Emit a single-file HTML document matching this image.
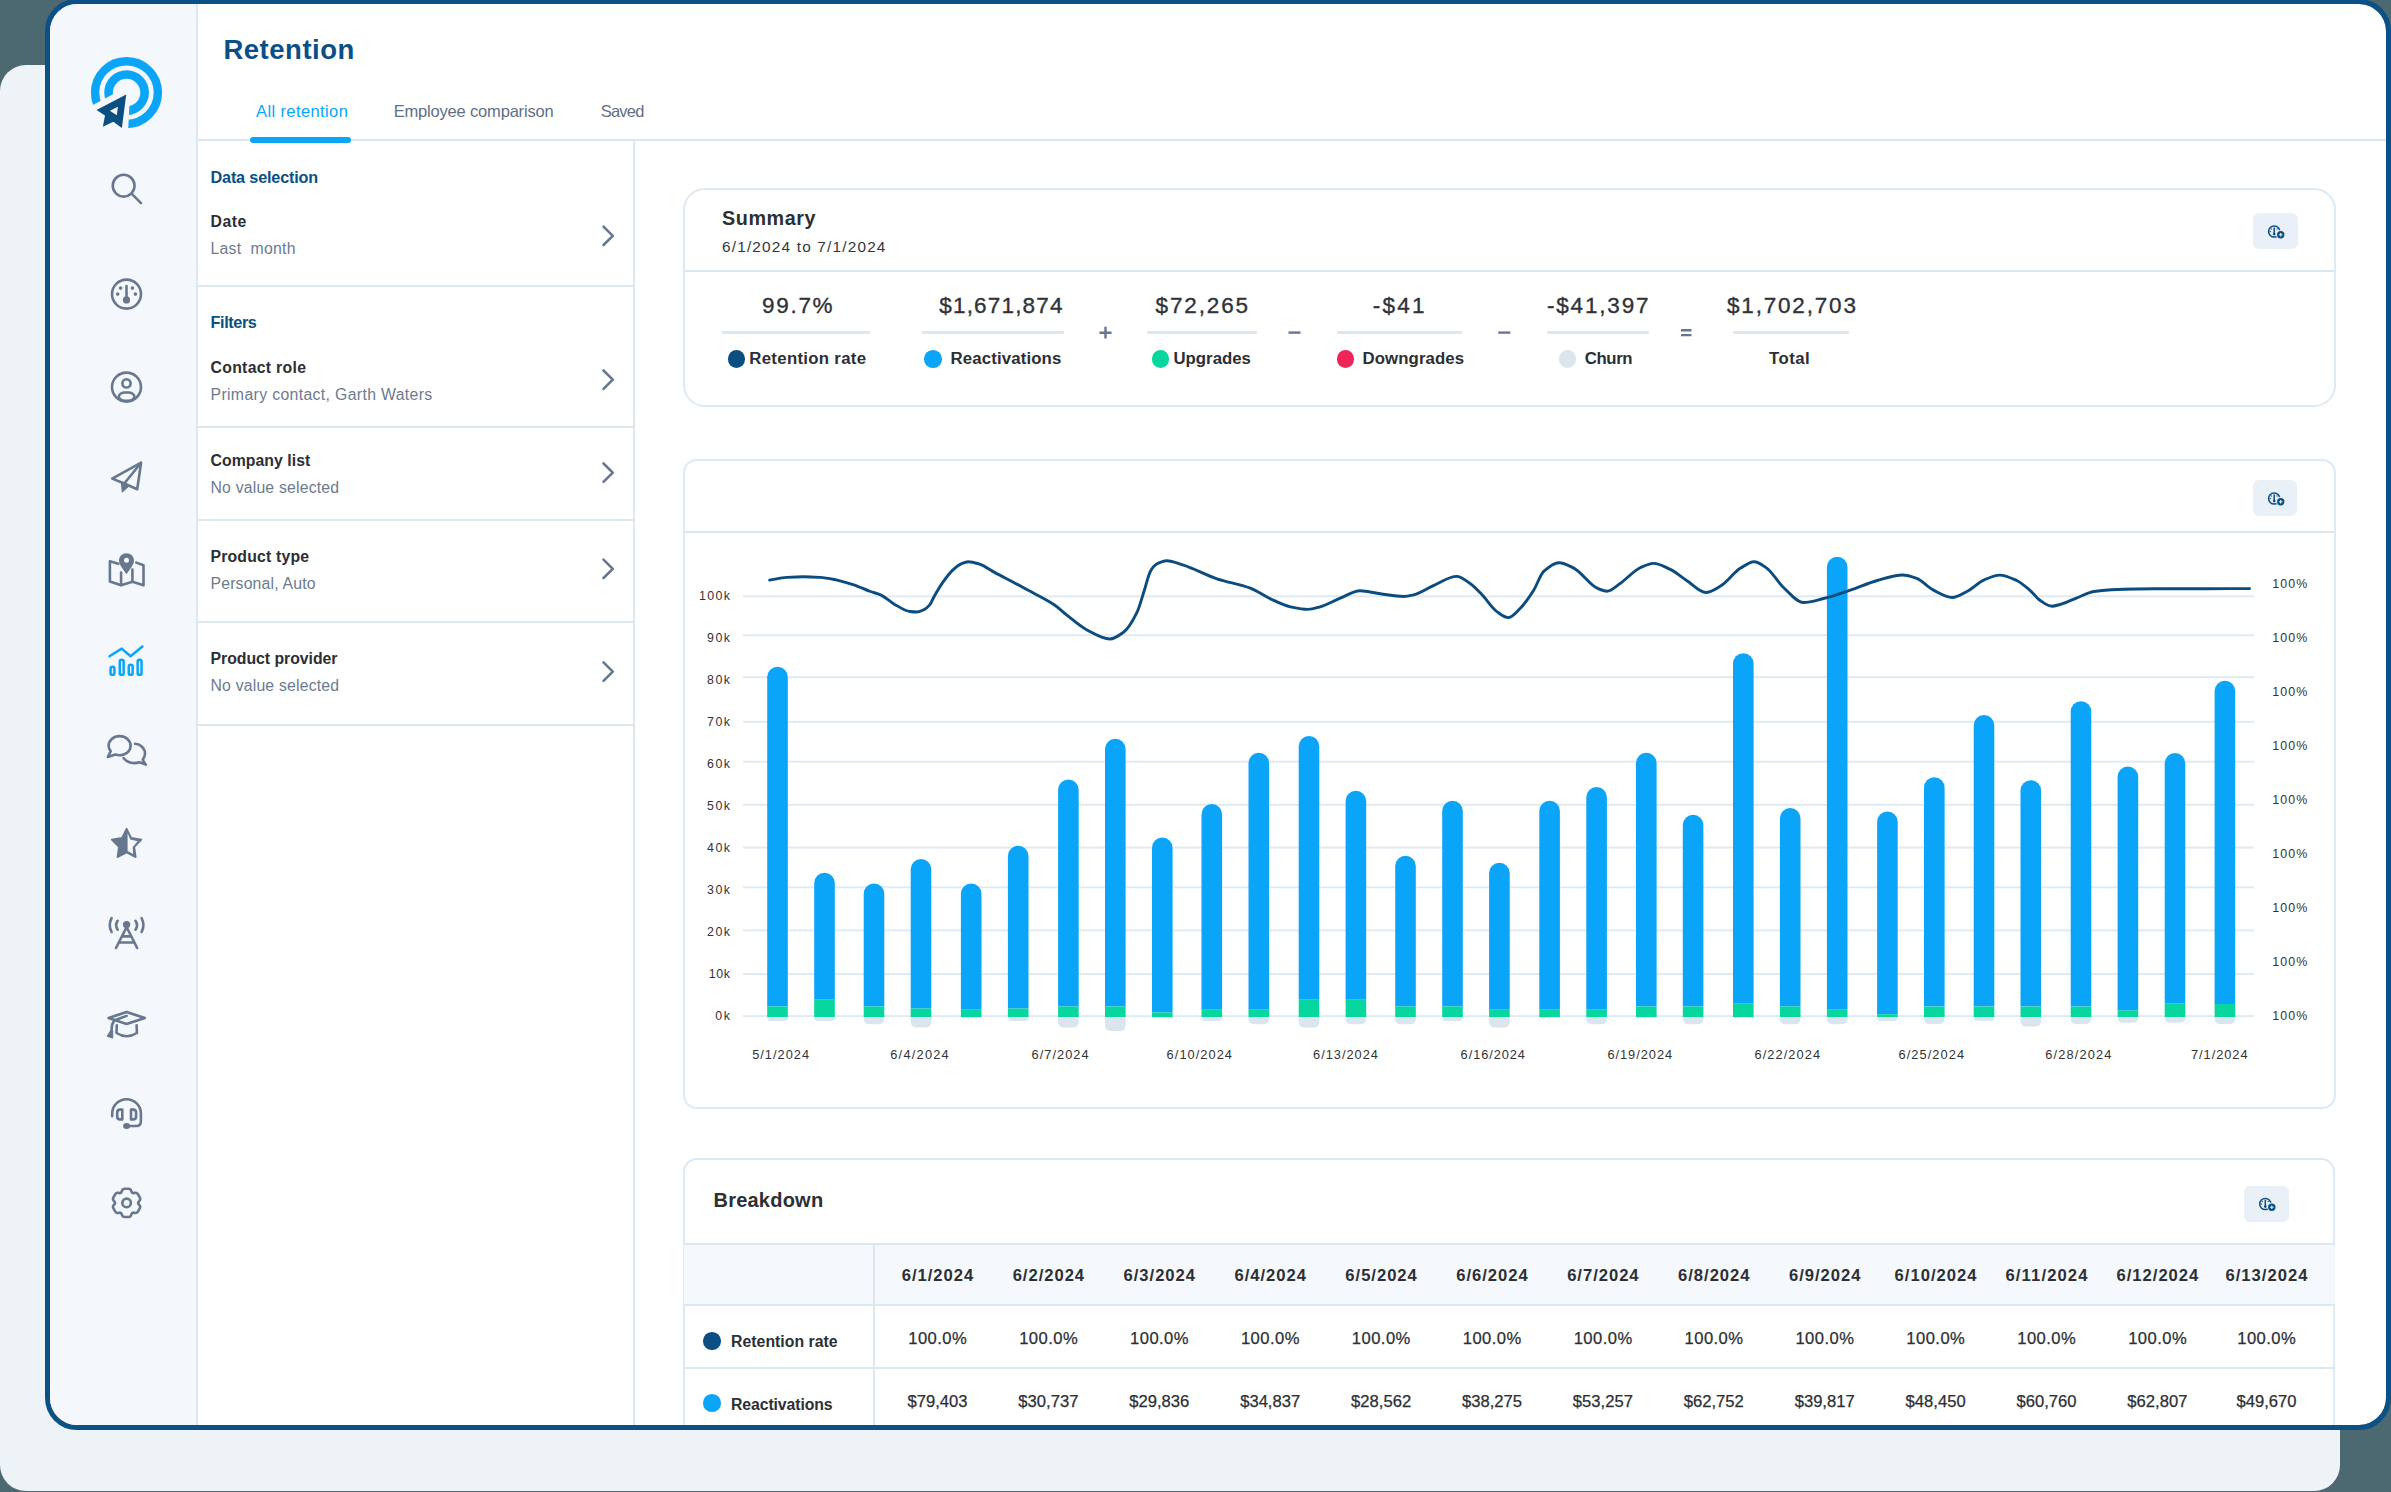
<!DOCTYPE html>
<html><head><meta charset="utf-8"><style>
html,body{margin:0;padding:0}
body{width:2391px;height:1492px;position:relative;overflow:hidden;background:#4c6870;font-family:"Liberation Sans",sans-serif}
.back{position:absolute;left:0;top:65px;width:2340px;height:1426px;border-radius:26px;background:#eef3f8}
.frame{position:absolute;left:45px;top:-1px;width:2346px;height:1431px;box-sizing:border-box;border:5px solid #0b5185;border-radius:32px;background:#fff;background-clip:padding-box;overflow:hidden}
.inner{position:absolute;left:-50px;top:-4px;width:2391px;height:1492px}
.t{position:absolute;white-space:nowrap;line-height:1}
svg{position:absolute;left:0;top:0}
</style></head><body>
<div class="back"></div>
<div class="frame"><div class="inner">
<div style="position:absolute;left:196px;top:139.2px;width:2190px;height:2px;background:#dbe7f1"></div>
<div style="position:absolute;left:196.0px;top:4px;width:1.6px;height:1421px;background:#dde8f1"></div>
<div style="position:absolute;left:50px;top:4px;width:146px;height:1421px;background:#f4f8fc"></div>
<div style="position:absolute;left:632.6px;top:141px;width:2px;height:1284px;background:#dbe7f1"></div>
<div style="position:absolute;left:196px;top:284.8px;width:437px;height:2px;background:#dbe7f1"></div>
<div style="position:absolute;left:196px;top:425.8px;width:437px;height:2px;background:#dbe7f1"></div>
<div style="position:absolute;left:196px;top:518.5px;width:437px;height:2px;background:#dbe7f1"></div>
<div style="position:absolute;left:196px;top:621.0px;width:437px;height:2px;background:#dbe7f1"></div>
<div style="position:absolute;left:196px;top:723.6px;width:437px;height:2px;background:#dbe7f1"></div>
<div style="position:absolute;left:249.8px;top:137px;width:101px;height:5.6px;background:#0aa5f8;border-radius:3px"></div>
<div class="t" style="left:223.40px;top:36.11px;font-size:27.5px;font-weight:700;color:#0b4f85;letter-spacing:0.528px;">Retention</div>
<div class="t" style="left:256.00px;top:102.52px;font-size:16.5px;color:#0aa5f8;letter-spacing:0.390px;">All retention</div>
<div class="t" style="left:393.70px;top:102.52px;font-size:16.5px;color:#5f6f86;letter-spacing:-0.182px;">Employee comparison</div>
<div class="t" style="left:600.70px;top:102.52px;font-size:16.5px;color:#5f6f86;letter-spacing:-0.769px;">Saved</div>
<div class="t" style="left:210.50px;top:168.88px;font-size:16.2px;font-weight:700;color:#0b4f85;letter-spacing:-0.157px;">Data selection</div>
<div class="t" style="left:210.50px;top:214.12px;font-size:15.8px;font-weight:700;color:#2c2f34;letter-spacing:0.505px;">Date</div>
<div class="t" style="left:210.50px;top:240.62px;font-size:15.8px;color:#6b7b90;letter-spacing:0.244px;white-space:pre;">Last  month</div>
<div class="t" style="left:210.50px;top:314.28px;font-size:16.2px;font-weight:700;color:#0b4f85;letter-spacing:-0.367px;">Filters</div>
<div class="t" style="left:210.50px;top:359.92px;font-size:15.8px;font-weight:700;color:#2c2f34;letter-spacing:0.301px;">Contact role</div>
<div class="t" style="left:210.50px;top:386.62px;font-size:15.8px;color:#6b7b90;letter-spacing:0.354px;">Primary contact, Garth Waters</div>
<div class="t" style="left:210.50px;top:452.72px;font-size:15.8px;font-weight:700;color:#2c2f34;letter-spacing:0.052px;">Company list</div>
<div class="t" style="left:210.50px;top:480.02px;font-size:15.8px;color:#6b7b90;letter-spacing:0.187px;">No value selected</div>
<div class="t" style="left:210.50px;top:549.02px;font-size:15.8px;font-weight:700;color:#2c2f34;letter-spacing:0.178px;">Product type</div>
<div class="t" style="left:210.50px;top:576.12px;font-size:15.8px;color:#6b7b90;letter-spacing:0.171px;">Personal, Auto</div>
<div class="t" style="left:210.50px;top:651.12px;font-size:15.8px;font-weight:700;color:#2c2f34;letter-spacing:-0.018px;">Product provider</div>
<div class="t" style="left:210.50px;top:677.92px;font-size:15.8px;color:#6b7b90;letter-spacing:0.187px;">No value selected</div>
<div style="position:absolute;left:682.5px;top:188.4px;width:1653.1px;height:218.20000000000002px;border:2px solid #dde9f3;border-radius:22px;box-sizing:border-box"></div>
<div style="position:absolute;left:682.5px;top:458.7px;width:1653.1px;height:650.0999999999999px;border:2px solid #dde9f3;border-radius:14px;box-sizing:border-box"></div>
<div style="position:absolute;left:682.9px;top:1157.9px;width:1652.2999999999997px;height:342.0999999999999px;border:2px solid #dde9f3;border-radius:14px;box-sizing:border-box"></div>
<div style="position:absolute;left:684px;top:269.8px;width:1650px;height:2px;background:#dbe7f1"></div>
<div style="position:absolute;left:684px;top:530.9px;width:1650px;height:2px;background:#dbe7f1"></div>
<div class="t" style="left:722.00px;top:208.63px;font-size:19.8px;font-weight:700;color:#2c2f34;letter-spacing:0.552px;">Summary</div>
<div class="t" style="left:722.00px;top:238.96px;font-size:15.4px;color:#33373d;letter-spacing:1.169px;">6/1/2024 to 7/1/2024</div>
<div class="t" style="left:762.00px;top:294.84px;font-size:22.5px;color:#2f3237;letter-spacing:1.703px;-webkit-text-stroke:0.35px #2f3237;">99.7%</div>
<div class="t" style="left:939.30px;top:294.84px;font-size:22.5px;color:#2f3237;letter-spacing:1.176px;-webkit-text-stroke:0.35px #2f3237;">$1,671,874</div>
<div class="t" style="left:1155.60px;top:294.84px;font-size:22.5px;color:#2f3237;letter-spacing:1.860px;-webkit-text-stroke:0.35px #2f3237;">$72,265</div>
<div class="t" style="left:1372.70px;top:294.84px;font-size:22.5px;color:#2f3237;letter-spacing:2.267px;-webkit-text-stroke:0.35px #2f3237;">-$41</div>
<div class="t" style="left:1546.90px;top:294.84px;font-size:22.5px;color:#2f3237;letter-spacing:1.832px;-webkit-text-stroke:0.35px #2f3237;">-$41,397</div>
<div class="t" style="left:1727.00px;top:294.84px;font-size:22.5px;color:#2f3237;letter-spacing:1.810px;-webkit-text-stroke:0.35px #2f3237;">$1,702,703</div>
<div style="position:absolute;left:722.3px;top:331.4px;width:148.20000000000005px;height:2.2px;background:#dce7f1;border-radius:1px"></div>
<div style="position:absolute;left:921.6px;top:331.4px;width:142.39999999999998px;height:2.2px;background:#dce7f1;border-radius:1px"></div>
<div style="position:absolute;left:1147px;top:331.4px;width:109.70000000000005px;height:2.2px;background:#dce7f1;border-radius:1px"></div>
<div style="position:absolute;left:1337px;top:331.4px;width:124.70000000000005px;height:2.2px;background:#dce7f1;border-radius:1px"></div>
<div style="position:absolute;left:1547px;top:331.4px;width:101.59999999999991px;height:2.2px;background:#dce7f1;border-radius:1px"></div>
<div style="position:absolute;left:1732.8px;top:331.4px;width:116.10000000000014px;height:2.2px;background:#dce7f1;border-radius:1px"></div>
<div style="position:absolute;left:727.60px;top:350.30px;width:17.6px;height:17.6px;border-radius:50%;background:#0b4f82"></div>
<div class="t" style="left:749.30px;top:350.77px;font-size:16.8px;font-weight:700;color:#2c2f34;letter-spacing:0.302px;">Retention rate</div>
<div style="position:absolute;left:924.20px;top:350.30px;width:17.6px;height:17.6px;border-radius:50%;background:#0aa5f8"></div>
<div class="t" style="left:950.50px;top:350.77px;font-size:16.8px;font-weight:700;color:#2c2f34;letter-spacing:0.143px;">Reactivations</div>
<div style="position:absolute;left:1151.90px;top:350.30px;width:17.6px;height:17.6px;border-radius:50%;background:#07d69f"></div>
<div class="t" style="left:1173.40px;top:350.77px;font-size:16.8px;font-weight:700;color:#2c2f34;letter-spacing:0.022px;">Upgrades</div>
<div style="position:absolute;left:1336.90px;top:350.30px;width:17.6px;height:17.6px;border-radius:50%;background:#ef2558"></div>
<div class="t" style="left:1362.50px;top:350.77px;font-size:16.8px;font-weight:700;color:#2c2f34;letter-spacing:0.100px;">Downgrades</div>
<div style="position:absolute;left:1558.70px;top:350.30px;width:17.6px;height:17.6px;border-radius:50%;background:#dbe5ee"></div>
<div class="t" style="left:1584.70px;top:350.77px;font-size:16.8px;font-weight:700;color:#2c2f34;letter-spacing:-0.369px;">Churn</div>
<div class="t" style="left:1769.00px;top:350.77px;font-size:16.8px;font-weight:700;color:#2c2f34;letter-spacing:0.477px;">Total</div>
<div style="position:absolute;left:2253.1px;top:213.1px;width:44.6px;height:36px;border-radius:6px;background:#e9f0f8"></div>
<div style="position:absolute;left:2252.9px;top:480.1px;width:44.6px;height:36px;border-radius:6px;background:#e9f0f8"></div>
<div style="position:absolute;left:2244px;top:1186px;width:44.6px;height:36px;border-radius:6px;background:#e9f0f8"></div>
<div class="t" style="left:713.50px;top:1190.36px;font-size:20px;font-weight:700;color:#2c2f34;letter-spacing:0.225px;">Breakdown</div>
<div style="position:absolute;left:684px;top:1243.5px;width:1651px;height:62px;background:#f5f8fc"></div>
<div style="position:absolute;left:684px;top:1242.6px;width:1651px;height:2px;background:#dbe7f1"></div>
<div style="position:absolute;left:684px;top:1304.4px;width:1651px;height:2px;background:#dbe7f1"></div>
<div style="position:absolute;left:684px;top:1366.9px;width:1651px;height:2px;background:#dbe7f1"></div>
<div style="position:absolute;left:872.9px;top:1243.5px;width:2px;height:200px;background:#dbe7f1"></div>
<div class="t" style="left:901.75px;top:1267.54px;font-size:16.6px;font-weight:700;color:#2c2f34;letter-spacing:0.978px;">6/1/2024</div>
<div class="t" style="left:908.25px;top:1330.74px;font-size:16.6px;color:#2c2f34;letter-spacing:0.445px;-webkit-text-stroke:0.25px #2c2f34;">100.0%</div>
<div class="t" style="left:907.45px;top:1394.14px;font-size:16.6px;color:#2c2f34;letter-spacing:0.015px;-webkit-text-stroke:0.25px #2c2f34;">$79,403</div>
<div class="t" style="left:1012.65px;top:1267.54px;font-size:16.6px;font-weight:700;color:#2c2f34;letter-spacing:0.978px;">6/2/2024</div>
<div class="t" style="left:1019.15px;top:1330.74px;font-size:16.6px;color:#2c2f34;letter-spacing:0.445px;-webkit-text-stroke:0.25px #2c2f34;">100.0%</div>
<div class="t" style="left:1018.35px;top:1394.14px;font-size:16.6px;color:#2c2f34;letter-spacing:0.015px;-webkit-text-stroke:0.25px #2c2f34;">$30,737</div>
<div class="t" style="left:1123.55px;top:1267.54px;font-size:16.6px;font-weight:700;color:#2c2f34;letter-spacing:0.978px;">6/3/2024</div>
<div class="t" style="left:1130.05px;top:1330.74px;font-size:16.6px;color:#2c2f34;letter-spacing:0.445px;-webkit-text-stroke:0.25px #2c2f34;">100.0%</div>
<div class="t" style="left:1129.25px;top:1394.14px;font-size:16.6px;color:#2c2f34;letter-spacing:0.015px;-webkit-text-stroke:0.25px #2c2f34;">$29,836</div>
<div class="t" style="left:1234.45px;top:1267.54px;font-size:16.6px;font-weight:700;color:#2c2f34;letter-spacing:0.978px;">6/4/2024</div>
<div class="t" style="left:1240.95px;top:1330.74px;font-size:16.6px;color:#2c2f34;letter-spacing:0.445px;-webkit-text-stroke:0.25px #2c2f34;">100.0%</div>
<div class="t" style="left:1240.15px;top:1394.14px;font-size:16.6px;color:#2c2f34;letter-spacing:0.015px;-webkit-text-stroke:0.25px #2c2f34;">$34,837</div>
<div class="t" style="left:1345.35px;top:1267.54px;font-size:16.6px;font-weight:700;color:#2c2f34;letter-spacing:0.978px;">6/5/2024</div>
<div class="t" style="left:1351.85px;top:1330.74px;font-size:16.6px;color:#2c2f34;letter-spacing:0.445px;-webkit-text-stroke:0.25px #2c2f34;">100.0%</div>
<div class="t" style="left:1351.05px;top:1394.14px;font-size:16.6px;color:#2c2f34;letter-spacing:0.015px;-webkit-text-stroke:0.25px #2c2f34;">$28,562</div>
<div class="t" style="left:1456.25px;top:1267.54px;font-size:16.6px;font-weight:700;color:#2c2f34;letter-spacing:0.978px;">6/6/2024</div>
<div class="t" style="left:1462.75px;top:1330.74px;font-size:16.6px;color:#2c2f34;letter-spacing:0.445px;-webkit-text-stroke:0.25px #2c2f34;">100.0%</div>
<div class="t" style="left:1461.95px;top:1394.14px;font-size:16.6px;color:#2c2f34;letter-spacing:0.015px;-webkit-text-stroke:0.25px #2c2f34;">$38,275</div>
<div class="t" style="left:1567.15px;top:1267.54px;font-size:16.6px;font-weight:700;color:#2c2f34;letter-spacing:0.978px;">6/7/2024</div>
<div class="t" style="left:1573.65px;top:1330.74px;font-size:16.6px;color:#2c2f34;letter-spacing:0.445px;-webkit-text-stroke:0.25px #2c2f34;">100.0%</div>
<div class="t" style="left:1572.85px;top:1394.14px;font-size:16.6px;color:#2c2f34;letter-spacing:0.015px;-webkit-text-stroke:0.25px #2c2f34;">$53,257</div>
<div class="t" style="left:1678.05px;top:1267.54px;font-size:16.6px;font-weight:700;color:#2c2f34;letter-spacing:0.978px;">6/8/2024</div>
<div class="t" style="left:1684.55px;top:1330.74px;font-size:16.6px;color:#2c2f34;letter-spacing:0.445px;-webkit-text-stroke:0.25px #2c2f34;">100.0%</div>
<div class="t" style="left:1683.75px;top:1394.14px;font-size:16.6px;color:#2c2f34;letter-spacing:0.015px;-webkit-text-stroke:0.25px #2c2f34;">$62,752</div>
<div class="t" style="left:1788.95px;top:1267.54px;font-size:16.6px;font-weight:700;color:#2c2f34;letter-spacing:0.978px;">6/9/2024</div>
<div class="t" style="left:1795.45px;top:1330.74px;font-size:16.6px;color:#2c2f34;letter-spacing:0.445px;-webkit-text-stroke:0.25px #2c2f34;">100.0%</div>
<div class="t" style="left:1794.65px;top:1394.14px;font-size:16.6px;color:#2c2f34;letter-spacing:0.015px;-webkit-text-stroke:0.25px #2c2f34;">$39,817</div>
<div class="t" style="left:1894.60px;top:1267.54px;font-size:16.6px;font-weight:700;color:#2c2f34;letter-spacing:1.016px;">6/10/2024</div>
<div class="t" style="left:1906.35px;top:1330.74px;font-size:16.6px;color:#2c2f34;letter-spacing:0.445px;-webkit-text-stroke:0.25px #2c2f34;">100.0%</div>
<div class="t" style="left:1905.55px;top:1394.14px;font-size:16.6px;color:#2c2f34;letter-spacing:0.015px;-webkit-text-stroke:0.25px #2c2f34;">$48,450</div>
<div class="t" style="left:2005.50px;top:1267.54px;font-size:16.6px;font-weight:700;color:#2c2f34;letter-spacing:1.130px;">6/11/2024</div>
<div class="t" style="left:2017.25px;top:1330.74px;font-size:16.6px;color:#2c2f34;letter-spacing:0.445px;-webkit-text-stroke:0.25px #2c2f34;">100.0%</div>
<div class="t" style="left:2016.45px;top:1394.14px;font-size:16.6px;color:#2c2f34;letter-spacing:0.015px;-webkit-text-stroke:0.25px #2c2f34;">$60,760</div>
<div class="t" style="left:2116.40px;top:1267.54px;font-size:16.6px;font-weight:700;color:#2c2f34;letter-spacing:1.016px;">6/12/2024</div>
<div class="t" style="left:2128.15px;top:1330.74px;font-size:16.6px;color:#2c2f34;letter-spacing:0.445px;-webkit-text-stroke:0.25px #2c2f34;">100.0%</div>
<div class="t" style="left:2127.35px;top:1394.14px;font-size:16.6px;color:#2c2f34;letter-spacing:0.015px;-webkit-text-stroke:0.25px #2c2f34;">$62,807</div>
<div class="t" style="left:2225.50px;top:1267.54px;font-size:16.6px;font-weight:700;color:#2c2f34;letter-spacing:1.016px;">6/13/2024</div>
<div class="t" style="left:2237.25px;top:1330.74px;font-size:16.6px;color:#2c2f34;letter-spacing:0.445px;-webkit-text-stroke:0.25px #2c2f34;">100.0%</div>
<div class="t" style="left:2236.45px;top:1394.14px;font-size:16.6px;color:#2c2f34;letter-spacing:0.015px;-webkit-text-stroke:0.25px #2c2f34;">$49,670</div>
<div style="position:absolute;left:703.00px;top:1332.00px;width:17.6px;height:17.6px;border-radius:50%;background:#0b4f82"></div>
<div style="position:absolute;left:703.00px;top:1394.20px;width:17.6px;height:17.6px;border-radius:50%;background:#0aa5f8"></div>
<div class="t" style="left:731.00px;top:1334.02px;font-size:15.8px;font-weight:700;color:#2c2f34;letter-spacing:0.034px;">Retention rate</div>
<div class="t" style="left:731.00px;top:1396.82px;font-size:15.8px;font-weight:700;color:#2c2f34;letter-spacing:-0.090px;">Reactivations</div>
<svg width="2391" height="1492" viewBox="0 0 2391 1492">
<path d="M603.5,226.6 L612.8,235.8 L603.5,245.0" fill="none" stroke="#66778f" stroke-width="2.6" stroke-linecap="round" stroke-linejoin="round"/>
<path d="M603.5,370.5 L612.8,379.7 L603.5,388.9" fill="none" stroke="#66778f" stroke-width="2.6" stroke-linecap="round" stroke-linejoin="round"/>
<path d="M603.5,463.5 L612.8,472.7 L603.5,481.9" fill="none" stroke="#66778f" stroke-width="2.6" stroke-linecap="round" stroke-linejoin="round"/>
<path d="M603.5,559.6 L612.8,568.8 L603.5,578.0" fill="none" stroke="#66778f" stroke-width="2.6" stroke-linecap="round" stroke-linejoin="round"/>
<path d="M603.5,662.4 L612.8,671.6 L603.5,680.8" fill="none" stroke="#66778f" stroke-width="2.6" stroke-linecap="round" stroke-linejoin="round"/>
<defs><mask id="lm" maskUnits="userSpaceOnUse" x="0" y="0" width="2391" height="1492">
<rect x="0" y="0" width="2391" height="1492" fill="white"/>
<polygon points="130.50,85.00 76.00,113.90 76.00,152.00 127.00,152.00" fill="black"/></mask></defs>
<g mask="url(#lm)" fill="none" stroke="#0aa5f8"><circle cx="126.5" cy="92.6" r="31.4" stroke-width="8.4"/><circle cx="126.6" cy="92.6" r="18.05" stroke-width="8.6"/></g>
<path fill-rule="evenodd" fill="#0b4f82" d="M126.20,94.40 L96.50,109.90 L105.00,115.40 L102.90,126.80 L113.30,121.70 L121.90,127.90 Z M109.90,110.70 L117.90,106.70 L116.80,115.30 Z"/>
<g fill="none" stroke="#66778f" stroke-width="2.6" stroke-linecap="round" stroke-linejoin="round" stroke-width="3.1"><circle cx="123.65" cy="185.7" r="10.9"/><path d="M131.8,193.9 L141,203.1"/></g>
<g fill="none" stroke="#66778f" stroke-width="2.6" stroke-linecap="round" stroke-linejoin="round"><circle cx="126.5" cy="294.1" r="14.5"/><path d="M126.5,286 V298"/></g>
<g fill="#66778f"><circle cx="126.5" cy="299.9" r="3.6"/><circle cx="120.6" cy="288.1" r="1.8"/><circle cx="132.4" cy="288.1" r="1.8"/><circle cx="117.7" cy="294.1" r="1.8"/><circle cx="135.4" cy="294.1" r="1.8"/></g>
<g fill="none" stroke="#66778f" stroke-width="2.6" stroke-linecap="round" stroke-linejoin="round"><circle cx="126.5" cy="387.1" r="14.5"/><circle cx="126.5" cy="383.4" r="4.1"/><rect x="118.8" y="392.5" width="15.6" height="8.2" rx="6" ry="4.1"/></g>
<g fill="none" stroke="#66778f" stroke-width="2.6" stroke-linecap="round" stroke-linejoin="round"><path d="M112.2,478.6 L141.1,462.7 L137.2,489.2 L124.3,483.5 Z M141.1,462.7 L124.3,483.5"/></g>
<path d="M121.5,482.5 L122.3,491.8 L128.5,486.3 Z" fill="#66778f" stroke="#66778f" stroke-width="1.2" stroke-linejoin="round"/>
<g fill="none" stroke="#66778f" stroke-width="2.6" stroke-linecap="round" stroke-linejoin="round"><path d="M118.3,563.8 L109.9,561.3 V581.6 L121.1,585.3 L132.4,581.7 L143.5,585.3 V565.2 L136.3,562.6"/><path d="M121.1,572.5 V585"/><path d="M132.4,569.5 V581.5"/></g>
<path d="M126.5,553.2 C130.8,553.2 134,556.4 134,560.6 C134,565 129.5,569.8 126.5,574.2 C123.5,569.8 119,565 119,560.6 C119,556.4 122.2,553.2 126.5,553.2 Z" fill="#66778f"/><circle cx="126.5" cy="560.3" r="2.5" fill="#f4f8fc"/>
<g fill="none" stroke="#0aa5f8" stroke-width="2.5" stroke-linecap="round" stroke-linejoin="round"><path d="M109.5,656.3 L121.7,648.6 L130.6,656.3 L142.4,646.5"/>
<rect x="110.55" y="666.85" width="3.9" height="8.00" rx="1.95"/>
<rect x="119.75" y="659.85" width="3.9" height="15.00" rx="1.95"/>
<rect x="128.75" y="664.75" width="3.9" height="10.10" rx="1.95"/>
<rect x="137.65" y="659.85" width="3.9" height="15.00" rx="1.95"/>
</g>
<g fill="none" stroke="#66778f" stroke-width="2.6" stroke-linecap="round" stroke-linejoin="round"><path d="M110.7,751.1 C109.4,749.5 108.6,747.6 108.6,745.7 C108.6,740.4 113.5,736.1 119.6,736.1 C125.7,736.1 130.6,740.4 130.6,745.7 C130.6,751 125.7,755.3 119.6,755.3 C118.1,755.3 116.6,755 115.3,754.6 L107.8,757 Z"/>
<path d="M135.1,743.8 C140.9,744.3 145,748.5 145,753.5 C145,755.9 144.2,758 142.7,759.9 L145.8,764.6 L139.6,762.3 C137.9,762.8 136,763.1 134.2,763.1 C129.6,763.1 125.8,761.1 123.6,758.1"/></g>
<path d="M126.6,828.6 L131.2,837.9 L141.5,839.6 L134.3,846.9 L135.8,857.2 L126.6,852.6 L117.4,857.2 L118.9,846.9 L111.7,839.6 L122,837.9 Z" fill="#66778f" stroke="#66778f" stroke-width="1.6" stroke-linejoin="round"/>
<path d="M127.6,833.2 L130.3,839.4 L137.6,841.2 L132.6,847.2 L133.3,853.9 L127.6,851 Z" fill="#f4f8fc"/>
<g fill="none" stroke="#66778f" stroke-width="2.6" stroke-linecap="round" stroke-linejoin="round"><path d="M125.9,928.5 L116,948 M127.3,928.5 L137.2,948 M122.9,936.4 H130.3 M119.6,942.5 H133.6"/><path d="M117.7,920.8 Q114.6,925.2 117.7,929.7 M111.6,918.1 Q107.9,925 111.6,932 M135.5,920.8 Q138.6,925.2 135.5,929.7 M141.6,918.1 Q145.3,925 141.6,932"/></g>
<circle cx="126.6" cy="924.6" r="3.7" fill="#66778f"/>
<g fill="none" stroke="#66778f" stroke-width="2.6" stroke-linecap="round" stroke-linejoin="round"><path d="M108.6,1018.1 L126.6,1011.9 L144.8,1018.1 L126.6,1024 Z"/><path d="M126.6,1015.9 L114.8,1020.2 Q111.3,1023.5 111.6,1031"/><path d="M116.8,1025.2 L116.5,1033 Q126.6,1039.5 136.9,1033 L136.6,1025.2"/></g>
<path d="M110.8,1030.6 L107.3,1036.2 L112.6,1037.9 L112.6,1030.6 Z" fill="#66778f" stroke="#66778f" stroke-width="1.2" stroke-linejoin="round"/>
<g fill="none" stroke="#66778f" stroke-width="2.6" stroke-linecap="round" stroke-linejoin="round"><path d="M112.2,1116.3 L112.2,1113.6 A14.35,14.35 0 0 1 140.9,1113.6 L140.9,1121.3 Q140.9,1126 136.3,1126 L127.5,1126"/><path d="M122.3,1109.6 L120,1109.6 Q117.2,1109.6 117.2,1112.6 L117.2,1116.4 Q117.2,1119.4 120,1119.4 L122.3,1119.4 Z"/><path d="M131,1109.6 L133.3,1109.6 Q136.1,1109.6 136.1,1112.6 L136.1,1116.4 Q136.1,1119.4 133.3,1119.4 L131,1119.4 Z"/></g>
<ellipse cx="126.6" cy="1126" rx="3.5" ry="2.9" fill="#66778f"/>
<g fill="none" stroke="#66778f" stroke-width="2.6" stroke-linecap="round" stroke-linejoin="round"><path d="M121.95,1190.89 Q122.55,1188.77 124.75,1188.77 L128.45,1188.77 Q130.65,1188.77 131.25,1190.89 L131.40,1191.43 Q132.00,1193.55 134.13,1193.01 L134.68,1192.87 Q136.81,1192.33 137.91,1194.23 L139.76,1197.44 Q140.86,1199.34 139.33,1200.92 L138.93,1201.32 Q137.40,1202.90 138.93,1204.48 L139.33,1204.88 Q140.86,1206.46 139.76,1208.36 L137.91,1211.57 Q136.81,1213.47 134.68,1212.93 L134.13,1212.79 Q132.00,1212.25 131.40,1214.37 L131.25,1214.91 Q130.65,1217.03 128.45,1217.03 L124.75,1217.03 Q122.55,1217.03 121.95,1214.91 L121.80,1214.37 Q121.20,1212.25 119.07,1212.79 L118.52,1212.93 Q116.39,1213.47 115.29,1211.57 L113.44,1208.36 Q112.34,1206.46 113.87,1204.88 L114.27,1204.48 Q115.80,1202.90 114.27,1201.32 L113.87,1200.92 Q112.34,1199.34 113.44,1197.44 L115.29,1194.23 Q116.39,1192.33 118.52,1192.87 L119.07,1193.01 Q121.20,1193.55 121.80,1191.43 Z"/><circle cx="126.6" cy="1202.9" r="4.3"/></g>
<g stroke="#66778f" stroke-width="2.4" stroke-linecap="butt"><path d="M1099.5,332.7 H1111.5 M1105.5,326.8 V338.6"/><path d="M1288.5,332.6 H1300.5"/><path d="M1498.3,332.6 H1510.3"/><path d="M1681,330.3 H1691.5 M1681,335.1 H1691.5"/></g>
<g fill="none" stroke="#0b4f82" stroke-width="1.5" stroke-linecap="round"><circle cx="2274.2" cy="231.5" r="5.6"/><path d="M2274.2,228.1 V233.7"/></g><g fill="#0b4f82"><circle cx="2274.2" cy="234.1" r="1.3"/><circle cx="2271.2999999999997" cy="228.9" r="0.7"/><circle cx="2277.1" cy="228.9" r="0.7"/><circle cx="2270.2" cy="231.5" r="0.7"/></g><circle cx="2280.7" cy="234.7" r="4.6" fill="#e9f0f8"/><circle cx="2280.7" cy="234.7" r="3.7" fill="#0b4f82"/><path d="M2280.7,232.9 V236.5 M2278.8999999999996,234.7 H2282.5" stroke="#e9f0f8" stroke-width="1.1"/>
<g fill="none" stroke="#0b4f82" stroke-width="1.5" stroke-linecap="round"><circle cx="2274.2" cy="498.5" r="5.6"/><path d="M2274.2,495.1 V500.7"/></g><g fill="#0b4f82"><circle cx="2274.2" cy="501.1" r="1.3"/><circle cx="2271.2999999999997" cy="495.9" r="0.7"/><circle cx="2277.1" cy="495.9" r="0.7"/><circle cx="2270.2" cy="498.5" r="0.7"/></g><circle cx="2280.7" cy="501.7" r="4.6" fill="#e9f0f8"/><circle cx="2280.7" cy="501.7" r="3.7" fill="#0b4f82"/><path d="M2280.7,499.9 V503.5 M2278.8999999999996,501.7 H2282.5" stroke="#e9f0f8" stroke-width="1.1"/>
<g fill="none" stroke="#0b4f82" stroke-width="1.5" stroke-linecap="round"><circle cx="2265.3" cy="1204" r="5.6"/><path d="M2265.3,1200.6 V1206.2"/></g><g fill="#0b4f82"><circle cx="2265.3" cy="1206.6" r="1.3"/><circle cx="2262.4" cy="1201.4" r="0.7"/><circle cx="2268.2000000000003" cy="1201.4" r="0.7"/><circle cx="2261.3" cy="1204" r="0.7"/></g><circle cx="2271.8" cy="1207.2" r="4.6" fill="#e9f0f8"/><circle cx="2271.8" cy="1207.2" r="3.7" fill="#0b4f82"/><path d="M2271.8,1205.4 V1209 M2270.0,1207.2 H2273.6000000000004" stroke="#e9f0f8" stroke-width="1.1"/>
<rect x="743" y="595.3" width="1511" height="2" fill="#e0eaf3"/>
<rect x="743" y="634.2" width="1511" height="2" fill="#e0eaf3"/>
<rect x="743" y="676.2" width="1511" height="2" fill="#e0eaf3"/>
<rect x="743" y="720.8" width="1511" height="2" fill="#e0eaf3"/>
<rect x="743" y="760.7" width="1511" height="2" fill="#e0eaf3"/>
<rect x="743" y="803.8" width="1511" height="2" fill="#e0eaf3"/>
<rect x="743" y="846.6" width="1511" height="2" fill="#e0eaf3"/>
<rect x="743" y="886.3" width="1511" height="2" fill="#e0eaf3"/>
<rect x="743" y="929.4" width="1511" height="2" fill="#e0eaf3"/>
<rect x="743" y="973.0" width="1511" height="2" fill="#e0eaf3"/>
<rect x="743" y="1015.1" width="1511" height="2" fill="#e0eaf3"/>
<path d="M767.20,1006.50 V677.00 A10.30,10.30 0 0 1 787.80,677.00 V1006.50 Z" fill="#0aa5f8"/>
<rect x="767.20" y="1006.50" width="20.6" height="10.70" fill="#07d69f"/>
<path d="M767.20,1017.20 H787.80 V1017.20 Q787.80,1020.90 784.10,1020.90 H770.90 Q767.20,1020.90 767.20,1017.20 Z" fill="#dbe5ee"/>
<path d="M814.20,999.80 V883.10 A10.30,10.30 0 0 1 834.80,883.10 V999.80 Z" fill="#0aa5f8"/>
<rect x="814.20" y="999.80" width="20.6" height="17.40" fill="#07d69f"/>
<path d="M814.20,1017.20 H834.80 V1017.20 Q834.80,1020.90 831.10,1020.90 H817.90 Q814.20,1020.90 814.20,1017.20 Z" fill="#dbe5ee"/>
<path d="M863.70,1006.50 V893.80 A10.30,10.30 0 0 1 884.30,893.80 V1006.50 Z" fill="#0aa5f8"/>
<rect x="863.70" y="1006.50" width="20.6" height="10.70" fill="#07d69f"/>
<path d="M863.70,1017.20 H884.30 V1018.30 Q884.30,1024.30 878.30,1024.30 H869.70 Q863.70,1024.30 863.70,1018.30 Z" fill="#dbe5ee"/>
<path d="M910.70,1008.50 V869.30 A10.30,10.30 0 0 1 931.30,869.30 V1008.50 Z" fill="#0aa5f8"/>
<rect x="910.70" y="1008.50" width="20.6" height="8.70" fill="#07d69f"/>
<path d="M910.70,1017.20 H931.30 V1021.60 Q931.30,1027.60 925.30,1027.60 H916.70 Q910.70,1027.60 910.70,1021.60 Z" fill="#dbe5ee"/>
<path d="M960.90,1009.80 V893.80 A10.30,10.30 0 0 1 981.50,893.80 V1009.80 Z" fill="#0aa5f8"/>
<rect x="960.90" y="1009.80" width="20.6" height="7.40" fill="#07d69f"/>
<path d="M1007.90,1008.50 V855.90 A10.30,10.30 0 0 1 1028.50,855.90 V1008.50 Z" fill="#0aa5f8"/>
<rect x="1007.90" y="1008.50" width="20.6" height="8.70" fill="#07d69f"/>
<path d="M1007.90,1017.20 H1028.50 V1017.20 Q1028.50,1020.90 1024.80,1020.90 H1011.60 Q1007.90,1020.90 1007.90,1017.20 Z" fill="#dbe5ee"/>
<path d="M1058.10,1006.50 V789.90 A10.30,10.30 0 0 1 1078.70,789.90 V1006.50 Z" fill="#0aa5f8"/>
<rect x="1058.10" y="1006.50" width="20.6" height="10.70" fill="#07d69f"/>
<path d="M1058.10,1017.20 H1078.70 V1021.60 Q1078.70,1027.60 1072.70,1027.60 H1064.10 Q1058.10,1027.60 1058.10,1021.60 Z" fill="#dbe5ee"/>
<path d="M1105.00,1006.50 V749.00 A10.30,10.30 0 0 1 1125.60,749.00 V1006.50 Z" fill="#0aa5f8"/>
<rect x="1105.00" y="1006.50" width="20.6" height="10.70" fill="#07d69f"/>
<path d="M1105.00,1017.20 H1125.60 V1025.00 Q1125.60,1031.00 1119.60,1031.00 H1111.00 Q1105.00,1031.00 1105.00,1025.00 Z" fill="#dbe5ee"/>
<path d="M1152.00,1012.50 V847.90 A10.30,10.30 0 0 1 1172.60,847.90 V1012.50 Z" fill="#0aa5f8"/>
<rect x="1152.00" y="1012.50" width="20.6" height="4.70" fill="#07d69f"/>
<path d="M1201.50,1009.80 V814.40 A10.30,10.30 0 0 1 1222.10,814.40 V1009.80 Z" fill="#0aa5f8"/>
<rect x="1201.50" y="1009.80" width="20.6" height="7.40" fill="#07d69f"/>
<path d="M1201.50,1017.20 H1222.10 V1017.20 Q1222.10,1020.90 1218.40,1020.90 H1205.20 Q1201.50,1020.90 1201.50,1017.20 Z" fill="#dbe5ee"/>
<path d="M1248.50,1009.80 V763.10 A10.30,10.30 0 0 1 1269.10,763.10 V1009.80 Z" fill="#0aa5f8"/>
<rect x="1248.50" y="1009.80" width="20.6" height="7.40" fill="#07d69f"/>
<path d="M1248.50,1017.20 H1269.10 V1018.30 Q1269.10,1024.30 1263.10,1024.30 H1254.50 Q1248.50,1024.30 1248.50,1018.30 Z" fill="#dbe5ee"/>
<path d="M1298.70,999.80 V746.30 A10.30,10.30 0 0 1 1319.30,746.30 V999.80 Z" fill="#0aa5f8"/>
<rect x="1298.70" y="999.80" width="20.6" height="17.40" fill="#07d69f"/>
<path d="M1298.70,1017.20 H1319.30 V1021.60 Q1319.30,1027.60 1313.30,1027.60 H1304.70 Q1298.70,1027.60 1298.70,1021.60 Z" fill="#dbe5ee"/>
<path d="M1345.60,999.80 V801.00 A10.30,10.30 0 0 1 1366.20,801.00 V999.80 Z" fill="#0aa5f8"/>
<rect x="1345.60" y="999.80" width="20.6" height="17.40" fill="#07d69f"/>
<path d="M1345.60,1017.20 H1366.20 V1018.30 Q1366.20,1024.30 1360.20,1024.30 H1351.60 Q1345.60,1024.30 1345.60,1018.30 Z" fill="#dbe5ee"/>
<path d="M1395.20,1006.50 V866.00 A10.30,10.30 0 0 1 1415.80,866.00 V1006.50 Z" fill="#0aa5f8"/>
<rect x="1395.20" y="1006.50" width="20.6" height="10.70" fill="#07d69f"/>
<path d="M1395.20,1017.20 H1415.80 V1018.30 Q1415.80,1024.30 1409.80,1024.30 H1401.20 Q1395.20,1024.30 1395.20,1018.30 Z" fill="#dbe5ee"/>
<path d="M1442.20,1006.50 V811.00 A10.30,10.30 0 0 1 1462.80,811.00 V1006.50 Z" fill="#0aa5f8"/>
<rect x="1442.20" y="1006.50" width="20.6" height="10.70" fill="#07d69f"/>
<path d="M1442.20,1017.20 H1462.80 V1017.20 Q1462.80,1020.90 1459.10,1020.90 H1445.90 Q1442.20,1020.90 1442.20,1017.20 Z" fill="#dbe5ee"/>
<path d="M1489.10,1009.80 V873.00 A10.30,10.30 0 0 1 1509.70,873.00 V1009.80 Z" fill="#0aa5f8"/>
<rect x="1489.10" y="1009.80" width="20.6" height="7.40" fill="#07d69f"/>
<path d="M1489.10,1017.20 H1509.70 V1021.60 Q1509.70,1027.60 1503.70,1027.60 H1495.10 Q1489.10,1027.60 1489.10,1021.60 Z" fill="#dbe5ee"/>
<path d="M1539.30,1009.80 V811.00 A10.30,10.30 0 0 1 1559.90,811.00 V1009.80 Z" fill="#0aa5f8"/>
<rect x="1539.30" y="1009.80" width="20.6" height="7.40" fill="#07d69f"/>
<path d="M1586.30,1009.80 V797.30 A10.30,10.30 0 0 1 1606.90,797.30 V1009.80 Z" fill="#0aa5f8"/>
<rect x="1586.30" y="1009.80" width="20.6" height="7.40" fill="#07d69f"/>
<path d="M1586.30,1017.20 H1606.90 V1018.30 Q1606.90,1024.30 1600.90,1024.30 H1592.30 Q1586.30,1024.30 1586.30,1018.30 Z" fill="#dbe5ee"/>
<path d="M1636.00,1006.50 V763.10 A10.30,10.30 0 0 1 1656.60,763.10 V1006.50 Z" fill="#0aa5f8"/>
<rect x="1636.00" y="1006.50" width="20.6" height="10.70" fill="#07d69f"/>
<path d="M1682.80,1006.50 V825.10 A10.30,10.30 0 0 1 1703.40,825.10 V1006.50 Z" fill="#0aa5f8"/>
<rect x="1682.80" y="1006.50" width="20.6" height="10.70" fill="#07d69f"/>
<path d="M1682.80,1017.20 H1703.40 V1018.30 Q1703.40,1024.30 1697.40,1024.30 H1688.80 Q1682.80,1024.30 1682.80,1018.30 Z" fill="#dbe5ee"/>
<path d="M1733.00,1003.10 V663.60 A10.30,10.30 0 0 1 1753.60,663.60 V1003.10 Z" fill="#0aa5f8"/>
<rect x="1733.00" y="1003.10" width="20.6" height="14.10" fill="#07d69f"/>
<path d="M1779.90,1006.50 V818.40 A10.30,10.30 0 0 1 1800.50,818.40 V1006.50 Z" fill="#0aa5f8"/>
<rect x="1779.90" y="1006.50" width="20.6" height="10.70" fill="#07d69f"/>
<path d="M1779.90,1017.20 H1800.50 V1018.30 Q1800.50,1024.30 1794.50,1024.30 H1785.90 Q1779.90,1024.30 1779.90,1018.30 Z" fill="#dbe5ee"/>
<path d="M1826.90,1009.80 V567.10 A10.30,10.30 0 0 1 1847.50,567.10 V1009.80 Z" fill="#0aa5f8"/>
<rect x="1826.90" y="1009.80" width="20.6" height="7.40" fill="#07d69f"/>
<path d="M1826.90,1017.20 H1847.50 V1018.30 Q1847.50,1024.30 1841.50,1024.30 H1832.90 Q1826.90,1024.30 1826.90,1018.30 Z" fill="#dbe5ee"/>
<path d="M1877.10,1014.20 V821.70 A10.30,10.30 0 0 1 1897.70,821.70 V1014.20 Z" fill="#0aa5f8"/>
<rect x="1877.10" y="1014.20" width="20.6" height="3.00" fill="#07d69f"/>
<path d="M1877.10,1017.20 H1897.70 V1017.20 Q1897.70,1020.90 1894.00,1020.90 H1880.80 Q1877.10,1020.90 1877.10,1017.20 Z" fill="#dbe5ee"/>
<path d="M1924.00,1006.60 V787.60 A10.30,10.30 0 0 1 1944.60,787.60 V1006.60 Z" fill="#0aa5f8"/>
<rect x="1924.00" y="1006.60" width="20.6" height="10.60" fill="#07d69f"/>
<path d="M1924.00,1017.20 H1944.60 V1018.10 Q1944.60,1024.10 1938.60,1024.10 H1930.00 Q1924.00,1024.10 1924.00,1018.10 Z" fill="#dbe5ee"/>
<path d="M1973.70,1006.60 V725.30 A10.30,10.30 0 0 1 1994.30,725.30 V1006.60 Z" fill="#0aa5f8"/>
<rect x="1973.70" y="1006.60" width="20.6" height="10.60" fill="#07d69f"/>
<path d="M1973.70,1017.20 H1994.30 V1017.20 Q1994.30,1020.70 1990.80,1020.70 H1977.20 Q1973.70,1020.70 1973.70,1017.20 Z" fill="#dbe5ee"/>
<path d="M2020.50,1006.60 V790.50 A10.30,10.30 0 0 1 2041.10,790.50 V1006.60 Z" fill="#0aa5f8"/>
<rect x="2020.50" y="1006.60" width="20.6" height="10.60" fill="#07d69f"/>
<path d="M2020.50,1017.20 H2041.10 V1020.50 Q2041.10,1026.50 2035.10,1026.50 H2026.50 Q2020.50,1026.50 2020.50,1020.50 Z" fill="#dbe5ee"/>
<path d="M2070.70,1006.60 V711.60 A10.30,10.30 0 0 1 2091.30,711.60 V1006.60 Z" fill="#0aa5f8"/>
<rect x="2070.70" y="1006.60" width="20.6" height="10.60" fill="#07d69f"/>
<path d="M2070.70,1017.20 H2091.30 V1018.10 Q2091.30,1024.10 2085.30,1024.10 H2076.70 Q2070.70,1024.10 2070.70,1018.10 Z" fill="#dbe5ee"/>
<path d="M2117.60,1010.40 V776.80 A10.30,10.30 0 0 1 2138.20,776.80 V1010.40 Z" fill="#0aa5f8"/>
<rect x="2117.60" y="1010.40" width="20.6" height="6.80" fill="#07d69f"/>
<path d="M2117.60,1017.20 H2138.20 V1017.20 Q2138.20,1022.80 2132.60,1022.80 H2123.20 Q2117.60,1022.80 2117.60,1017.20 Z" fill="#dbe5ee"/>
<path d="M2164.70,1003.20 V763.40 A10.30,10.30 0 0 1 2185.30,763.40 V1003.20 Z" fill="#0aa5f8"/>
<rect x="2164.70" y="1003.20" width="20.6" height="14.00" fill="#07d69f"/>
<path d="M2164.70,1017.20 H2185.30 V1017.20 Q2185.30,1022.80 2179.70,1022.80 H2170.30 Q2164.70,1022.80 2164.70,1017.20 Z" fill="#dbe5ee"/>
<path d="M2214.60,1004.00 V691.00 A10.30,10.30 0 0 1 2235.20,691.00 V1004.00 Z" fill="#0aa5f8"/>
<rect x="2214.60" y="1004.00" width="20.6" height="13.20" fill="#07d69f"/>
<path d="M2214.60,1017.20 H2235.20 V1017.90 Q2235.20,1023.90 2229.20,1023.90 H2220.60 Q2214.60,1023.90 2214.60,1017.90 Z" fill="#dbe5ee"/>
<path d="M769.6,580.1 C775.3,579.2 781.1,577.7 786.8,577.4 C792.4,577.1 797.9,576.8 803.5,576.8 C809.1,576.8 814.6,577.1 820.2,577.4 C825.8,577.7 831.4,579.0 837.0,580.1 C842.6,581.2 848.1,583.0 853.7,584.8 C859.3,586.6 864.8,589.5 870.4,591.5 C873.8,592.7 877.1,593.3 880.5,594.8 C885.0,596.7 889.4,601.4 893.9,603.9 C899.3,606.9 904.6,610.9 910.0,611.5 C912.3,611.8 914.7,612.0 917.0,612.0 C919.4,612.0 921.7,610.8 924.1,609.6 C926.0,608.7 927.8,607.1 929.7,604.9 C931.3,603.1 932.8,598.8 934.4,596.0 C937.2,591.1 940.0,586.4 942.8,582.4 C945.9,578.0 949.1,573.5 952.2,570.6 C955.3,567.7 958.5,564.9 961.6,563.6 C963.8,562.7 966.0,561.7 968.2,561.7 C972.3,561.7 976.3,563.2 980.4,564.5 C985.1,566.0 989.8,569.9 994.5,572.4 C999.7,575.2 1004.8,577.8 1010.0,580.5 C1015.6,583.5 1021.2,586.5 1026.8,589.6 C1036.2,594.7 1045.5,598.8 1054.9,605.2 C1058.9,607.9 1062.9,612.1 1066.9,615.2 C1073.6,620.5 1080.3,626.5 1087.0,630.0 C1094.6,633.9 1102.2,639.0 1109.8,639.0 C1114.5,639.0 1119.1,635.5 1123.8,632.0 C1128.3,628.6 1132.7,621.2 1137.2,611.9 C1139.4,607.3 1141.7,598.6 1143.9,591.8 C1146.1,585.0 1148.4,574.7 1150.6,571.0 C1152.6,567.7 1154.7,565.2 1156.7,564.1 C1160.0,562.3 1163.4,560.7 1166.7,560.7 C1172.3,560.7 1177.9,563.4 1183.5,565.1 C1194.6,568.6 1205.8,575.1 1216.9,578.8 C1228.1,582.5 1239.2,584.0 1250.4,588.2 C1257.1,590.7 1263.8,595.8 1270.5,598.9 C1277.2,602.0 1283.9,605.5 1290.6,606.9 C1296.4,608.1 1302.2,609.4 1308.0,609.4 C1312.0,609.4 1316.1,608.0 1320.1,606.9 C1326.8,605.1 1333.5,600.9 1340.2,598.2 C1346.9,595.5 1353.5,590.8 1360.2,590.8 C1366.9,590.8 1373.6,592.9 1380.3,593.8 C1388.1,594.8 1395.9,596.5 1403.7,596.5 C1407.1,596.5 1410.4,595.6 1413.8,594.8 C1420.5,593.2 1427.2,588.3 1433.9,585.4 C1441.5,582.1 1449.1,576.4 1456.7,576.4 C1461.2,576.4 1465.6,580.5 1470.1,583.5 C1474.1,586.2 1478.1,590.7 1482.1,594.8 C1487.0,599.9 1492.0,608.1 1496.9,611.6 C1500.7,614.3 1504.4,617.6 1508.2,617.6 C1512.2,617.6 1516.3,612.2 1520.3,608.2 C1524.8,603.8 1529.2,597.3 1533.7,590.2 C1537.0,584.9 1540.4,574.4 1543.7,571.4 C1548.8,566.8 1554.0,562.7 1559.1,562.7 C1564.0,562.7 1568.9,565.7 1573.8,568.1 C1581.6,572.0 1589.5,584.9 1597.3,588.2 C1600.5,589.6 1603.8,591.2 1607.0,591.2 C1611.4,591.2 1615.7,586.4 1620.1,583.5 C1626.8,579.0 1633.5,570.7 1640.2,567.7 C1644.6,565.7 1649.1,563.4 1653.5,563.4 C1659.1,563.4 1664.7,566.8 1670.3,569.4 C1675.9,572.0 1681.4,577.2 1687.0,580.8 C1693.3,584.9 1699.5,592.5 1705.8,592.5 C1710.7,592.5 1715.6,588.9 1720.5,586.1 C1727.2,582.2 1733.9,572.2 1740.6,568.1 C1745.1,565.4 1749.5,561.7 1754.0,561.7 C1758.2,561.7 1762.5,565.2 1766.7,568.1 C1772.3,572.0 1777.9,582.4 1783.5,587.5 C1790.2,593.6 1796.8,602.5 1803.5,602.5 C1810.2,602.5 1816.9,600.1 1823.6,598.5 C1832.5,596.4 1841.5,593.2 1850.4,590.2 C1859.3,587.2 1868.3,582.9 1877.2,580.5 C1885.6,578.2 1894.1,575.0 1902.5,575.0 C1907.2,575.0 1912.0,576.7 1916.7,578.4 C1922.3,580.4 1927.9,587.3 1933.5,590.1 C1939.7,593.3 1946.0,597.5 1952.2,597.5 C1957.1,597.5 1962.0,594.0 1966.9,591.5 C1972.5,588.7 1978.1,582.5 1983.7,580.1 C1989.0,577.8 1994.4,575.1 1999.7,575.1 C2005.5,575.1 2011.3,578.0 2017.1,580.7 C2021.6,582.8 2026.0,587.0 2030.5,590.8 C2033.9,593.7 2037.2,598.6 2040.6,600.8 C2044.4,603.2 2048.1,606.2 2051.9,606.2 C2054.6,606.2 2057.3,605.2 2060.0,604.5 C2065.4,603.1 2070.9,600.2 2076.3,598.1 C2082.2,595.8 2088.0,592.4 2093.9,591.5 C2099.8,590.6 2105.6,590.1 2111.5,589.8 C2126.1,589.2 2140.8,588.7 2155.4,588.7 C2173.0,588.7 2190.5,588.7 2208.1,588.7 C2221.9,588.7 2235.8,588.6 2249.6,588.6" fill="none" stroke="#0b4c80" stroke-width="2.9" stroke-linecap="round" stroke-linejoin="round"/>
</svg>
<div class="t" style="left:699.00px;top:589.60px;font-size:12.4px;color:#333333;letter-spacing:1.343px;">100k</div>
<div class="t" style="left:707.00px;top:631.60px;font-size:12.4px;color:#333333;letter-spacing:1.487px;">90k</div>
<div class="t" style="left:707.00px;top:673.60px;font-size:12.4px;color:#333333;letter-spacing:1.487px;">80k</div>
<div class="t" style="left:707.00px;top:715.60px;font-size:12.4px;color:#333333;letter-spacing:1.487px;">70k</div>
<div class="t" style="left:707.00px;top:757.60px;font-size:12.4px;color:#333333;letter-spacing:1.487px;">60k</div>
<div class="t" style="left:707.00px;top:799.60px;font-size:12.4px;color:#333333;letter-spacing:1.487px;">50k</div>
<div class="t" style="left:707.00px;top:841.60px;font-size:12.4px;color:#333333;letter-spacing:1.487px;">40k</div>
<div class="t" style="left:707.00px;top:883.60px;font-size:12.4px;color:#333333;letter-spacing:1.487px;">30k</div>
<div class="t" style="left:707.00px;top:925.60px;font-size:12.4px;color:#333333;letter-spacing:1.487px;">20k</div>
<div class="t" style="left:708.70px;top:967.60px;font-size:12.4px;color:#333333;letter-spacing:0.637px;">10k</div>
<div class="t" style="left:715.30px;top:1009.60px;font-size:12.4px;color:#333333;letter-spacing:1.556px;">0k</div>
<div class="t" style="left:2272.30px;top:578.00px;font-size:12.4px;color:#333333;letter-spacing:1.052px;">100%</div>
<div class="t" style="left:2272.30px;top:632.00px;font-size:12.4px;color:#333333;letter-spacing:1.052px;">100%</div>
<div class="t" style="left:2272.30px;top:686.00px;font-size:12.4px;color:#333333;letter-spacing:1.052px;">100%</div>
<div class="t" style="left:2272.30px;top:740.00px;font-size:12.4px;color:#333333;letter-spacing:1.052px;">100%</div>
<div class="t" style="left:2272.30px;top:794.00px;font-size:12.4px;color:#333333;letter-spacing:1.052px;">100%</div>
<div class="t" style="left:2272.30px;top:848.00px;font-size:12.4px;color:#333333;letter-spacing:1.052px;">100%</div>
<div class="t" style="left:2272.30px;top:902.00px;font-size:12.4px;color:#333333;letter-spacing:1.052px;">100%</div>
<div class="t" style="left:2272.30px;top:956.00px;font-size:12.4px;color:#333333;letter-spacing:1.052px;">100%</div>
<div class="t" style="left:2272.30px;top:1010.00px;font-size:12.4px;color:#333333;letter-spacing:1.052px;">100%</div>
<div class="t" style="left:752.15px;top:1048.96px;font-size:12.8px;color:#333333;letter-spacing:1.006px;">5/1/2024</div>
<div class="t" style="left:890.25px;top:1048.96px;font-size:12.8px;color:#333333;letter-spacing:1.235px;">6/4/2024</div>
<div class="t" style="left:1031.50px;top:1048.96px;font-size:12.8px;color:#333333;letter-spacing:1.049px;">6/7/2024</div>
<div class="t" style="left:1166.60px;top:1048.96px;font-size:12.8px;color:#333333;letter-spacing:1.055px;">6/10/2024</div>
<div class="t" style="left:1313.05px;top:1048.96px;font-size:12.8px;color:#333333;letter-spacing:0.993px;">6/13/2024</div>
<div class="t" style="left:1460.60px;top:1048.96px;font-size:12.8px;color:#333333;letter-spacing:0.930px;">6/16/2024</div>
<div class="t" style="left:1607.40px;top:1048.96px;font-size:12.8px;color:#333333;letter-spacing:0.980px;">6/19/2024</div>
<div class="t" style="left:1754.55px;top:1048.96px;font-size:12.8px;color:#333333;letter-spacing:1.067px;">6/22/2024</div>
<div class="t" style="left:1898.55px;top:1048.96px;font-size:12.8px;color:#333333;letter-spacing:1.067px;">6/25/2024</div>
<div class="t" style="left:2045.30px;top:1048.96px;font-size:12.8px;color:#333333;letter-spacing:1.155px;">6/28/2024</div>
<div class="t" style="left:2191.00px;top:1048.96px;font-size:12.8px;color:#333333;letter-spacing:0.963px;">7/1/2024</div>
</div></div>
</body></html>
